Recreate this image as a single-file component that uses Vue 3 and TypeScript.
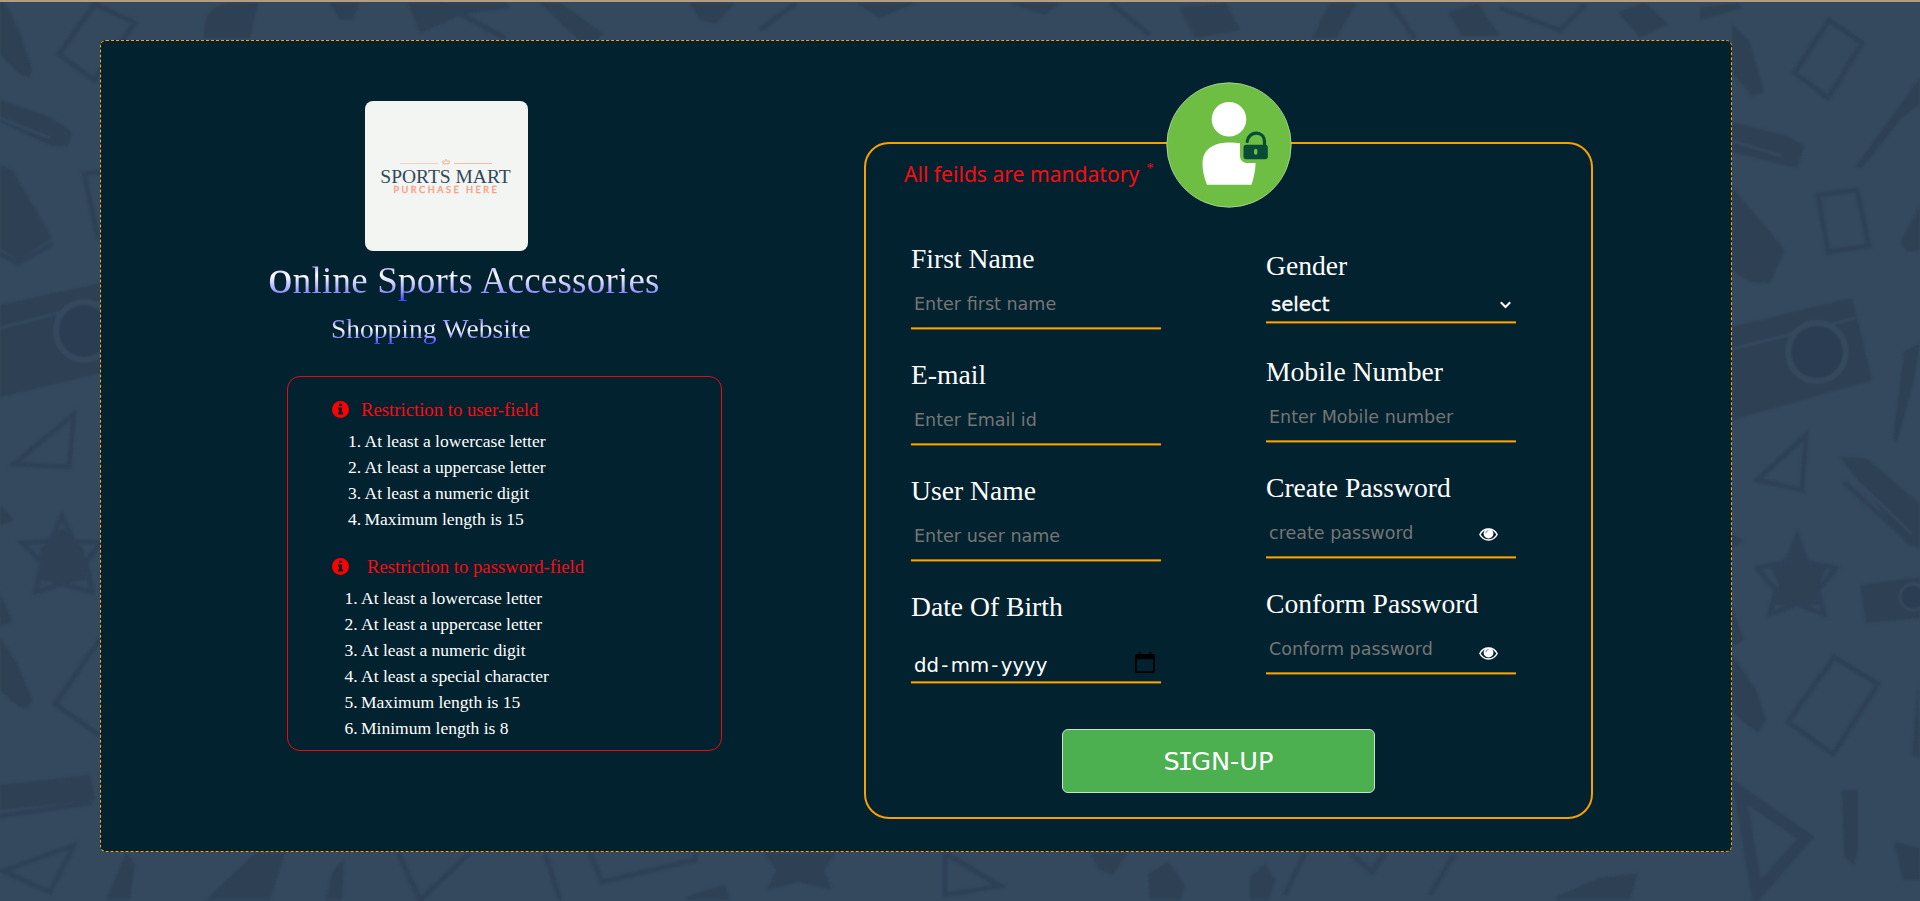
<script setup lang="ts">
interface Field {
  label: string
  hint: string
  kind: 'text' | 'date' | 'select' | 'password'
}

interface RuleSet {
  title: string
  key: string
  rules: string[]
}

const ruleSets: RuleSet[] = [
  {
    title: 'Restriction to user-field',
    key: 'user',
    rules: [
      'At least a lowercase letter',
      'At least a uppercase letter',
      'At least a numeric digit',
      'Maximum length is 15',
    ],
  },
  {
    title: 'Restriction to password-field',
    key: 'password',
    rules: [
      'At least a lowercase letter',
      'At least a uppercase letter',
      'At least a numeric digit',
      'At least a special character',
      'Maximum length is 15',
      'Minimum length is 8',
    ],
  },
]

const columns: { key: string; fields: Field[] }[] = [
  {
    key: 'left',
    fields: [
      { label: 'First Name', hint: 'Enter first name', kind: 'text' },
      { label: 'E-mail', hint: 'Enter Email id', kind: 'text' },
      { label: 'User Name', hint: 'Enter user name', kind: 'text' },
      { label: 'Date Of Birth', hint: '', kind: 'date' },
    ],
  },
  {
    key: 'right',
    fields: [
      { label: 'Gender', hint: 'select', kind: 'select' },
      { label: 'Mobile Number', hint: 'Enter Mobile number', kind: 'text' },
      { label: 'Create Password', hint: 'create password', kind: 'password' },
      { label: 'Conform Password', hint: 'Conform password', kind: 'password' },
    ],
  },
]

/* Stationery silhouettes scattered over the page background. */
const solids: string[] = [
  'M0 3H5L20 32 32 70 30 78 20 74 0 54z',
  'M0 100L50 117 72 132 68 147 52 146 0 122z',
  'M0 165L12 170 52 238 18 260 0 248z',
  'M0 305L101 283V373L0 397z',
  'M40 550L62 528 84 550 86 580 62 584 40 580z',
  'M0 505L14 520 0 526zM0 592L12 622 0 626z',
  'M0 637L18 665 32 700 26 709 18 706 0 690z',
  'M0 785L90 775 95 800 0 810z',
  'M203 38L206 18 214 8 228 3H258L250 38z',
  'M408 3L420 33 464 14 510 8 505 3z',
  'M540 3H560L604 34 596 40H578z',
  'M330 3H360L352 20H340z',
  'M690 3H735L715 24 700 20z',
  'M856 3H915L880 18zM1010 3H1060L1045 15z',
  'M1180 8L1225 3 1240 30 1195 38z',
  'M1330 3H1356L1336 38H1312z',
  'M1448 12L1478 4 1500 36H1462z',
  'M1618 12L1645 3 1668 24 1640 38z',
  'M1732 24L1750 42 1764 92 1752 96 1732 72z',
  'M1700 8L1738 3 1742 8 1700 20z',
  'M1732 122L1788 136 1804 146 1797 168 1780 164 1732 152z',
  'M1732 187L1785 250 1770 283 1750 282 1732 270z',
  'M1732 327L1852 298 1856 314 1872 380 1732 420z',
  'M1732 535L1744 540 1732 548zM1732 608L1744 640 1732 646z',
  'M1732 655L1756 690 1766 720 1758 733 1732 712z',
  'M1770 566L1787 565 1797 540 1807 565 1826 568 1817 590 1820 605H1776l3-20z',
  'M1855 167L1895 112 1920 78V104L1900 120 1862 168z',
  'M1900 243L1920 207V250L1908 252z',
  'M1840 457L1866 458 1920 504V548L1908 545z',
  'M1860 585L1920 577V618L1866 623z',
  'M1842 790H1858V850L1853 865 1844 855z',
  'M1894 842L1920 848V880H1903z',
  'M1918 680L1912 755 1920 758z',
  'M1904 352L1920 343 1914 380 1897 442 1893 438z',
  'M113 884L126 853 135 864 130 900H106z',
  'M210 896L255 853H285L270 900H205z',
  'M332 872L344 860 342 900H326z',
  'M765 853H835L824 870 832 890 798 882 767 890 776 870z',
  'M1148 874L1168 862 1185 885 1180 900H1150z',
  'M1250 877L1265 864 1275 880 1268 900H1250z',
  'M1560 895L1600 878 1638 873 1630 900H1555z',
  'M1090 853H1128L1112 875 1100 870z',
  'M690 895L725 885 730 900H685z',
]

const outlines: string[] = [
  'M59 54L95 4 135 23 94 80z',
  'M101 172L84 174 98 237 101 238',
  'M0 254L18 263 52 244',
  'M14 464L74 414 69 467z',
  'M22 543L50 541 62 516 74 541 101 543 86 562 92 592 62 584 36 592 42 562z',
  'M101 638L55 704 101 736',
  'M0 816L92 803',
  'M3 871L74 845 50 892z',
  'M255 3L238 38M440 3L505 38',
  'M760 30L796 3M1110 3L1150 35M1390 3L1415 38M1500 8L1560 30 1585 5',
  'M1795 73L1829 20 1862 43 1828 98z',
  'M1818 195L1857 190 1869 246 1828 252z',
  'M1757 480L1806 435 1802 490z',
  'M1757 568L1787 562 1797 536 1807 562 1836 568 1818 590 1824 614 1797 604 1770 614 1776 590z',
  'M1844 482L1913 545',
  'M1788 722L1834 657 1878 684 1833 754z',
  'M398 853L420 900 470 853M590 853L602 882 695 860V853',
  'M545 853L560 900M945 853L1000 886 945 895z',
  'M1285 895L1305 853M1350 853L1372 872 1385 853',
  'M1430 895L1455 853',
]

const heavyOutlines: string[] = ['M1740 792L1806 838 1757 893z']
</script>

<template>
  <div class="page">
    <svg class="backdrop" viewBox="0 0 1920 901" aria-hidden="true">
      <defs>
        <filter id="soften"><feGaussianBlur stdDeviation="1.3" /></filter>
      </defs>
      <g filter="url(#soften)">
        <path v-for="(d, i) in solids" :key="'s' + i" :d="d" class="solid" />
        <path v-for="(d, i) in outlines" :key="'o' + i" :d="d" class="outline" />
        <path v-for="(d, i) in heavyOutlines" :key="'h' + i" :d="d" class="outline heavy" />
        <path class="light" d="M0 118L50 138M0 328L101 302M1732 141L1782 156M1732 349L1856 318M1858 482L1912 534" />
        <ellipse class="ring" cx="84" cy="331" rx="28" ry="29" />
        <ellipse class="ring" cx="1817" cy="352" rx="29" ry="29" />
        <circle class="ring thin" cx="1913" cy="597" r="13" />
      </g>
    </svg>

    <main class="card">
      <section class="intro">
        <div class="logo">
          <svg class="logo-rule" viewBox="0 0 92 8">
            <path d="M0 5.5H38" stroke="#f8cdbf" />
            <path d="M54 5.5H92" stroke="#f5bba9" />
            <path d="M43 5.8L42.6 3 44.8 3.4 46 1.2 47.3 3.4 49.5 3 49 5.8z" fill="none" stroke="#f79d83" stroke-width=".8" />
          </svg>
          <strong class="logo-name">SPORTS MART</strong>
          <span class="logo-tag">PURCHASE HERE</span>
        </div>
        <h1 class="title"><span class="initial">o</span>nline Sports Accessories</h1>
        <h2 class="subtitle">Shopping Website</h2>

        <div class="rules">
          <div v-for="set in ruleSets" :key="set.key" class="rule-set" :class="set.key">
            <h3 class="rule-title">
              <svg class="info" viewBox="0 0 17 17">
                <circle cx="8.5" cy="8.5" r="8.5" fill="#f00" />
                <path d="M7 2.7h3v2.4H7zM6 6.5h4v5.1h1.1v2H6v-2h1.1V8.4H6z" fill="#03222f" />
              </svg>
              <span>{{ set.title }}</span>
            </h3>
            <ol class="rule-list">
              <li v-for="(rule, n) in set.rules" :key="rule"><span class="num">{{ n + 1 }}.</span>{{ rule }}</li>
            </ol>
          </div>
        </div>
      </section>

      <form class="form" @submit.prevent>
        <svg class="avatar" viewBox="0 0 126 126">
          <circle cx="63" cy="63" r="62.2" fill="#6fbe44" stroke="#b5dba0" stroke-width=".8" />
          <circle cx="63" cy="37.3" r="17.3" fill="#fff" />
          <path d="M74 61.2C66 60 56 60.5 50 62.5 41 66 36.500 72 36.500 82 36.600 90 38.500 96.500 41 102.800H85.500C87.500 96 89.500 89 89.600 81H81C76 80.500 74 77.500 74 73.500z" fill="#fff" />
          <path d="M81.200 59.500C82.500 48.500 98.500 48 98.500 60V64" fill="none" stroke="#064c37" stroke-width="3.200" stroke-linecap="round" />
          <rect x="77.500" y="62.800" width="24.300" height="14.500" rx="2.800" fill="#064c37" />
          <rect x="88" y="66.800" width="3.400" height="6" rx="1.700" fill="#6fbe44" />
        </svg>

        <p class="notice">All feilds are mandatory <span class="star">*</span></p>

        <div class="columns">
          <div v-for="col in columns" :key="col.key" class="column" :class="col.key">
            <div v-for="field in col.fields" :key="field.label" class="field" :class="field.kind">
              <label class="label">{{ field.label }}</label>
              <div class="control">
                <span v-if="field.kind === 'date'" class="value"
                  >dd<i class="dash">-</i>mm<i class="dash">-</i>yyyy</span
                >
                <span v-else class="value">{{ field.hint }}</span>

                <svg v-if="field.kind === 'date'" class="calendar" viewBox="0 0 20 21">
                  <path d="M18 2h-1.700V0h-2v2H5.700V0h-2v2H2C.9 2 0 2.900 0 4v15c0 1.100.9 2 2 2h16c1.100 0 2-.9 2-2V4c0-1.100-.9-2-2-2zm.2 17.200H1.800V7.300h16.400z" />
                </svg>
                <svg v-if="field.kind === 'select'" class="chevron" viewBox="0 0 11 8">
                  <path d="M.8 1.300L5.500 6 10.200 1.300" fill="none" stroke="#fff" stroke-width="2" />
                </svg>
                <svg v-if="field.kind === 'password'" class="eye" viewBox="0 0 19 13">
                  <path d="M.9 6.500C4.500-.9 14.500-.9 18.100 6.500 14.500 13.700 4.500 13.700.9 6.500z" fill="none" stroke="#fff" stroke-width="1.500" />
                  <circle cx="9.500" cy="5.600" r="4.900" fill="#fff" />
                  <path d="M6.900 5.300C6.900 3.700 8 2.700 9.400 2.600" fill="none" stroke="#03222f" stroke-width=".6" />
                </svg>
              </div>
            </div>
          </div>
        </div>

        <button class="submit" type="submit">S<span class="slab">I</span>GN-UP</button>
      </form>
    </main>
  </div>
</template>

<style>
body {
  margin: 0;
  overflow: hidden;
}
</style>

<style scoped>
.page {
  position: relative;
  box-sizing: border-box;
  height: 901px;
  padding: 38px 0 0 100px;
  border-top: 2px solid #b39c80;
  background: #34495e;
  color: #fff;
  font-family: 'Liberation Serif', 'Times New Roman', serif;
}
.backdrop {
  position: absolute;
  top: -2px;
  left: 0;
  width: 1920px;
  height: 901px;
  clip-path: inset(2px 0 0 0);
}
.solid {
  fill: #2d3f52;
}
.outline {
  fill: none;
  stroke: #2d4056;
  stroke-width: 5;
}
.outline.heavy {
  stroke-width: 12;
}
.light {
  fill: none;
  stroke: #34495e;
  stroke-width: 3;
}
.ring {
  fill: #2c3d53;
  stroke: #34485d;
  stroke-width: 6;
}
.ring.thin {
  stroke-width: 3;
}
.card {
  position: relative;
  box-sizing: border-box;
  display: flex;
  align-items: flex-start;
  width: 1632px;
  height: 812px;
  border: 1px dashed orange;
  border-radius: 6px;
  background: #03222f;
}
.intro {
  width: 763px;
  padding-top: 60px;
}
.logo {
  box-sizing: border-box;
  display: flex;
  flex-direction: column;
  align-items: center;
  width: 163px;
  height: 150px;
  margin-left: 264px;
  padding: 57px 2px 0 0;
  border-radius: 8px;
  background: #f3f5f2;
}
.logo-rule {
  width: 92px;
  height: 8px;
}
.logo-name {
  margin-top: 1px;
  color: #30485a;
  font-weight: 400;
  font-size: 19.5px;
  line-height: 20px;
  white-space: nowrap;
}
.logo-tag {
  margin: -2px -2px 0 0;
  color: #fb9c80;
  font: 400 9.2px/10px Lato, sans-serif;
  -webkit-text-stroke: 0.35px #fb9c80;
  letter-spacing: 2.5px;
  white-space: nowrap;
}
.title,
.subtitle {
  width: max-content;
  margin: 0;
  font-weight: 400;
  color: transparent;
  background-clip: text;
  -webkit-background-clip: text;
  white-space: nowrap;
}
.title {
  height: 44px;
  margin: 8px 0 0 167px;
  font-size: 37px;
  line-height: 44px;
  letter-spacing: 0.22px;
  background-image: linear-gradient(#7f7fff 0%, #fff 37%, #9c9cff 72%, #4040ff 96%);
}
.initial {
  font-size: 49px;
  line-height: 1px;
}
.subtitle {
  height: 32px;
  margin: 10px 0 0 230px;
  font-size: 27.5px;
  line-height: 32px;
  background-image: linear-gradient(#4040ff 0%, #fff 52%, #8080ff 80%, #4040ff 98%);
}
.rules {
  box-sizing: border-box;
  width: 435px;
  height: 375px;
  margin: 31px 0 0 186px;
  padding: 21px 0 0 44px;
  border: 1px solid #e90a10;
  border-radius: 13px;
}
.rule-set + .rule-set {
  margin-top: 23px;
}
.rule-title {
  display: flex;
  align-items: center;
  height: 24px;
  margin: 0;
  color: #fb0a10;
  font-weight: 400;
  font-size: 18.72px;
  line-height: 24px;
}
.info {
  width: 17px;
  height: 17px;
  margin: -1px 12px 0 0;
}
.password .info {
  margin-right: 18px;
}
.rule-list {
  margin: 6px 0 0 16px;
  padding: 0;
  list-style: none;
  font-size: 17.55px;
  line-height: 26px;
}
.password .rule-list {
  margin-left: 12.5px;
}
.num {
  display: inline-block;
  width: 16.5px;
}
.form {
  position: relative;
  box-sizing: border-box;
  width: 729px;
  height: 677px;
  margin-top: 101px;
  border: 2px solid #f7a003;
  border-radius: 25px;
}
.avatar {
  position: absolute;
  top: -62px;
  left: 299.5px;
  width: 126px;
  height: 126px;
}
.notice {
  display: flex;
  height: 30px;
  margin: 15px 0 0 38px;
  color: #fb0a10;
  font-family: 'Noto Sans', sans-serif;
  font-size: 21.1px;
  line-height: 30px;
}
.star {
  margin-left: 7px;
  font: 15px/18px 'Liberation Serif', serif;
}
.columns {
  display: flex;
  gap: 105px;
  margin: 54px 0 0 45px;
}
.column {
  display: flex;
  flex-direction: column;
  gap: 28px;
  width: 250px;
}
.column.right {
  padding-top: 7px;
}
.label {
  display: block;
  height: 32px;
  font-size: 27.6px;
  line-height: 32px;
  white-space: nowrap;
}
.control {
  box-sizing: border-box;
  display: flex;
  align-items: flex-start;
  width: 250px;
  height: 42px;
  margin-top: 14px;
  padding-left: 3px;
  background: linear-gradient(#a87409 0 1px, #ffa500 1px 2px, #6c5518 2px 3px) 0 calc(100% - 1px) / 100% 3px no-repeat;
  color: #757575;
  font: 17.55px/30px Verdana, 'DejaVu Sans', sans-serif;
}
.value {
  white-space: nowrap;
}
.date .control {
  height: 48px;
  padding-top: 14px;
  color: #fff;
  font-size: 19.7px;
}
.dash {
  margin: 0 2.3px;
  font-style: normal;
}
.calendar {
  width: 20px;
  height: 21px;
  margin: 1px 6px 0 auto;
}
.select {
  margin-bottom: 3px;
}
.select .control {
  height: 35px;
  margin-top: 8px;
  padding-left: 5px;
  color: #fff;
  font-size: 19.7px;
  -webkit-text-stroke: 0.3px #fff;
}
.chevron {
  width: 11px;
  height: 8px;
  margin: 11px 5px 0 auto;
}
.eye {
  width: 19px;
  height: 13px;
  margin: 10px 18px 0 auto;
}
.password:last-child .eye {
  margin-top: 13px;
}
.submit {
  box-sizing: border-box;
  display: block;
  width: 313px;
  height: 64px;
  margin: 44px 0 0 196px;
  padding: 0;
  border: 1px solid #c9e3ca;
  border-radius: 6px;
  background: #4caf50;
  color: #fff;
  font: 25.6px/62px Verdana, 'DejaVu Sans', sans-serif;
}
.slab {
  margin: 0 -2px;
  font-family: 'DejaVu Sans Mono', monospace;
}
</style>
